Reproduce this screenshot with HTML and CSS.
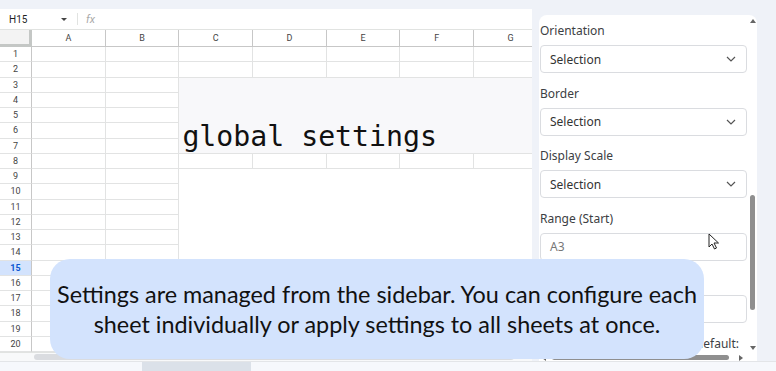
FILE: index.html
```html
<!DOCTYPE html>
<html lang="en">
<head>
    <meta charset="UTF-8">
    <meta name="viewport" content="width=device-width, initial-scale=1.0">
    <title>Global Settings</title>
    <link rel="stylesheet" href="styles.css">
</head>
<body>
    <div class="app">
        <div class="top-strip"></div>
        <div class="main">
            <div class="sheet">
                <div class="formula-bar">
                    <span class="name-box">H15</span>
                    <span class="caret"></span>
                    <span class="fx-sep"></span>
                    <span class="fx">fx</span>
                </div>
                <div class="grid" id="grid"></div>
                <div class="sheet-scroll"><div class="sheet-thumb"></div></div>
            </div>

            <div class="side">
                <div class="panel">
                    <div class="panel-body">
                        <div class="field">
                            <label class="field-label">Orientation</label>
                            <div class="select">Selection <svg width="10" height="6" viewBox="0 0 10 6"><path d="M1 1l4 4 4-4" fill="none" stroke="#555" stroke-width="1.2"/></svg></div>
                        </div>
                        <div class="field">
                            <label class="field-label">Border</label>
                            <div class="select">Selection <svg width="10" height="6" viewBox="0 0 10 6"><path d="M1 1l4 4 4-4" fill="none" stroke="#555" stroke-width="1.2"/></svg></div>
                        </div>
                        <div class="field">
                            <label class="field-label">Display Scale</label>
                            <div class="select">Selection <svg width="10" height="6" viewBox="0 0 10 6"><path d="M1 1l4 4 4-4" fill="none" stroke="#555" stroke-width="1.2"/></svg></div>
                        </div>
                        <div class="field">
                            <label class="field-label">Range (Start)</label>
                            <div class="input">A3</div>
                        </div>
                        <div class="field">
                            <label class="field-label">Range (End)</label>
                            <div class="input">H20</div>
                        </div>
                        <div class="field">
                            <label class="field-label">Save these settings as your default:</label>
                        </div>
                    </div>
                    <div class="vscroll">
                        <span class="arrow-up"></span>
                        <div class="vthumb"></div>
                        <span class="arrow-down"></span>
                    </div>
                    <div class="hscroll">
                        <span class="arrow-left"></span>
                        <div class="hthumb"></div>
                        <span class="arrow-right"></span>
                    </div>
                </div>
            </div>
        </div>
        <div class="bottom-strip"><div class="bottom-thumb"></div></div>
    </div>

    <div class="tooltip">
        Settings are managed from the sidebar. You can configure each<br>
        sheet individually or apply settings to all sheets at once.
    </div>

    <svg class="cursor" width="11" height="17" viewBox="0 0 11 17">
        <path d="M1 1v13l3-3 2.5 5 2-1-2.5-5h4.5z" fill="#fff" stroke="#222" stroke-width="1"/>
    </svg>

    <script>
        const grid = document.getElementById('grid');
        const cols = ['A', 'B', 'C', 'D', 'E', 'F', 'G'];

        function addCell(className, text) {
            const el = document.createElement('div');
            el.className = className;
            if (text) el.textContent = text;
            grid.appendChild(el);
            return el;
        }

        // merged areas first, the rest flows around them
        addCell('merged-title', 'global settings');
        addCell('merged-blank');

        addCell('corner');
        cols.forEach(c => addCell('col-head', c));

        for (let r = 1; r <= 20; r++) {
            addCell(r === 15 ? 'row-head active' : 'row-head', r);
            for (let c = 0; c < cols.length; c++) {
                if (c >= 2 && ((r >= 3 && r <= 7) || r >= 9)) continue;
                addCell('cell');
            }
        }
    </script>
</body>
</html>
```

FILE: styles.css
```css
* {
    box-sizing: border-box;
}

body {
    margin: 0;
    width: 776px;
    height: 371px;
    overflow: hidden;
    position: relative;
    background: #eff2f8;
    font-family: Roboto, "Liberation Sans", sans-serif;
}

.app {
    display: flex;
    flex-direction: column;
    height: 371px;
}

.top-strip {
    height: 9px;
    flex: none;
}

.main {
    display: flex;
    height: 352px;
    flex: none;
}

/* spreadsheet area */
.sheet {
    width: 532px;
    flex: none;
    background: #fff;
    display: flex;
    flex-direction: column;
    overflow: hidden;
}

.formula-bar {
    height: 21px;
    flex: none;
    display: flex;
    align-items: center;
    padding-left: 9px;
    border-bottom: 1px solid #e1e3e1;
    font-size: 10px;
    color: #1f1f1f;
}

.name-box {
    width: 52px;
}

.caret {
    border-left: 3px solid transparent;
    border-right: 3px solid transparent;
    border-top: 3px solid #444;
}

.fx-sep {
    width: 1px;
    height: 12px;
    background: #e1e3e1;
    margin: 0 8px 0 10px;
}

.fx {
    font-style: italic;
    font-size: 11px;
    color: #aaa;
}

.grid {
    display: grid;
    grid-template-columns: 32px repeat(7, 73.7px);
    grid-template-rows: 17px repeat(20, 15.25px);
    height: 322px;
    flex: none;
    font-size: 9px;
    color: #444;
}

.cell {
    border-right: 1px solid #e2e3e3;
    border-bottom: 1px solid #e2e3e3;
}

.corner {
    background: #f3f3f3;
    border-right: 3px solid #c4c7c5;
    border-bottom: 3px solid #c4c7c5;
}

.col-head {
    display: flex;
    align-items: center;
    justify-content: center;
    border-right: 1px solid #c7c7c7;
    border-bottom: 1px solid #c7c7c7;
}

.row-head {
    display: flex;
    align-items: center;
    justify-content: center;
    border-right: 1px solid #c7c7c7;
    border-bottom: 1px solid #e2e3e3;
}

.row-head.active {
    background: #d3e3fd;
    color: #0b57d0;
    font-weight: 700;
}

.merged-title {
    grid-column: 4 / 9;
    grid-row: 4 / 9;
    display: flex;
    align-items: flex-end;
    padding: 0 0 2px 3px;
    background: #f8f8fa;
    border-bottom: 1px solid #e2e3e3;
    font-family: "DejaVu Sans Mono", monospace;
    font-size: 28.2px;
    line-height: 1;
    color: #111;
    white-space: nowrap;
}

.merged-blank {
    grid-column: 4 / 9;
    grid-row: 10 / 22;
    background: #fff;
}

.sheet-scroll {
    height: 9px;
    flex: none;
    display: flex;
    align-items: center;
    padding-left: 34px;
    background: #f8f9fa;
    border-top: 1px solid #e1e3e1;
}

.sheet-thumb {
    width: 480px;
    height: 6px;
    border-radius: 3px;
    background: #dadce0;
}

/* sidebar */
.side {
    flex: 1;
    padding: 6px 19px 0 7px;
}

.panel {
    height: 346px;
    background: #fff;
    border-radius: 8px 8px 0 0;
    display: grid;
    grid-template-columns: 209px 9px;
    grid-template-rows: 339px 7px;
    overflow: hidden;
}

.panel-body {
    padding: 8px 0 0 1px;
    overflow: hidden;
    font-family: "Noto Sans", sans-serif;
    font-size: 12px;
    color: #3c4043;
}

.field {
    margin-bottom: 12.5px;
}

.field-label {
    display: block;
    height: 16px;
    line-height: 16px;
    margin-bottom: 6px;
    white-space: nowrap;
}

.select,
.input {
    width: 207px;
    height: 28px;
    display: flex;
    align-items: center;
    justify-content: space-between;
    padding: 0 10px 0 9px;
    border: 1px solid #dadce0;
    border-radius: 4px;
    color: #333;
}

.input {
    color: #777;
}

.vscroll {
    display: flex;
    flex-direction: column;
    align-items: center;
    padding-top: 4px;
}

.arrow-up,
.arrow-down {
    border-left: 3px solid transparent;
    border-right: 3px solid transparent;
}

.arrow-up {
    border-bottom: 4px solid #666;
}

.arrow-down {
    margin-top: auto;
    margin-bottom: 4px;
    border-top: 4px solid #666;
}

.vthumb {
    width: 5px;
    height: 115px;
    margin-top: 172px;
    border-radius: 3px;
    background: #8f8f8f;
}

.hscroll {
    grid-column: 1 / 3;
    display: flex;
    align-items: center;
    padding-left: 3px;
}

.arrow-left {
    border-top: 3px solid transparent;
    border-bottom: 3px solid transparent;
    border-right: 4px solid #666;
}

.hthumb {
    width: 177px;
    height: 5px;
    margin-left: 6px;
    border-radius: 3px;
    background: #8f8f8f;
}

.arrow-right {
    margin-left: 10px;
    border-top: 3px solid transparent;
    border-bottom: 3px solid transparent;
    border-left: 4px solid #666;
}

.bottom-strip {
    height: 10px;
    flex: none;
    background: #f6f8fc;
    border-top: 1px solid #e3e5e8;
}

.bottom-thumb {
    width: 109px;
    height: 9px;
    margin-left: 142px;
    background: #dbe1e9;
}

/* overlays */
.tooltip {
    position: absolute;
    left: 50px;
    top: 259px;
    width: 654px;
    height: 100px;
    display: flex;
    align-items: center;
    justify-content: center;
    border-radius: 20px;
    background: #d3e3fd;
    font-family: Lato, sans-serif;
    font-size: 23.4px;
    line-height: 30px;
    color: #111;
    text-align: center;
    white-space: nowrap;
}

.cursor {
    position: absolute;
    left: 708px;
    top: 233px;
}
```
